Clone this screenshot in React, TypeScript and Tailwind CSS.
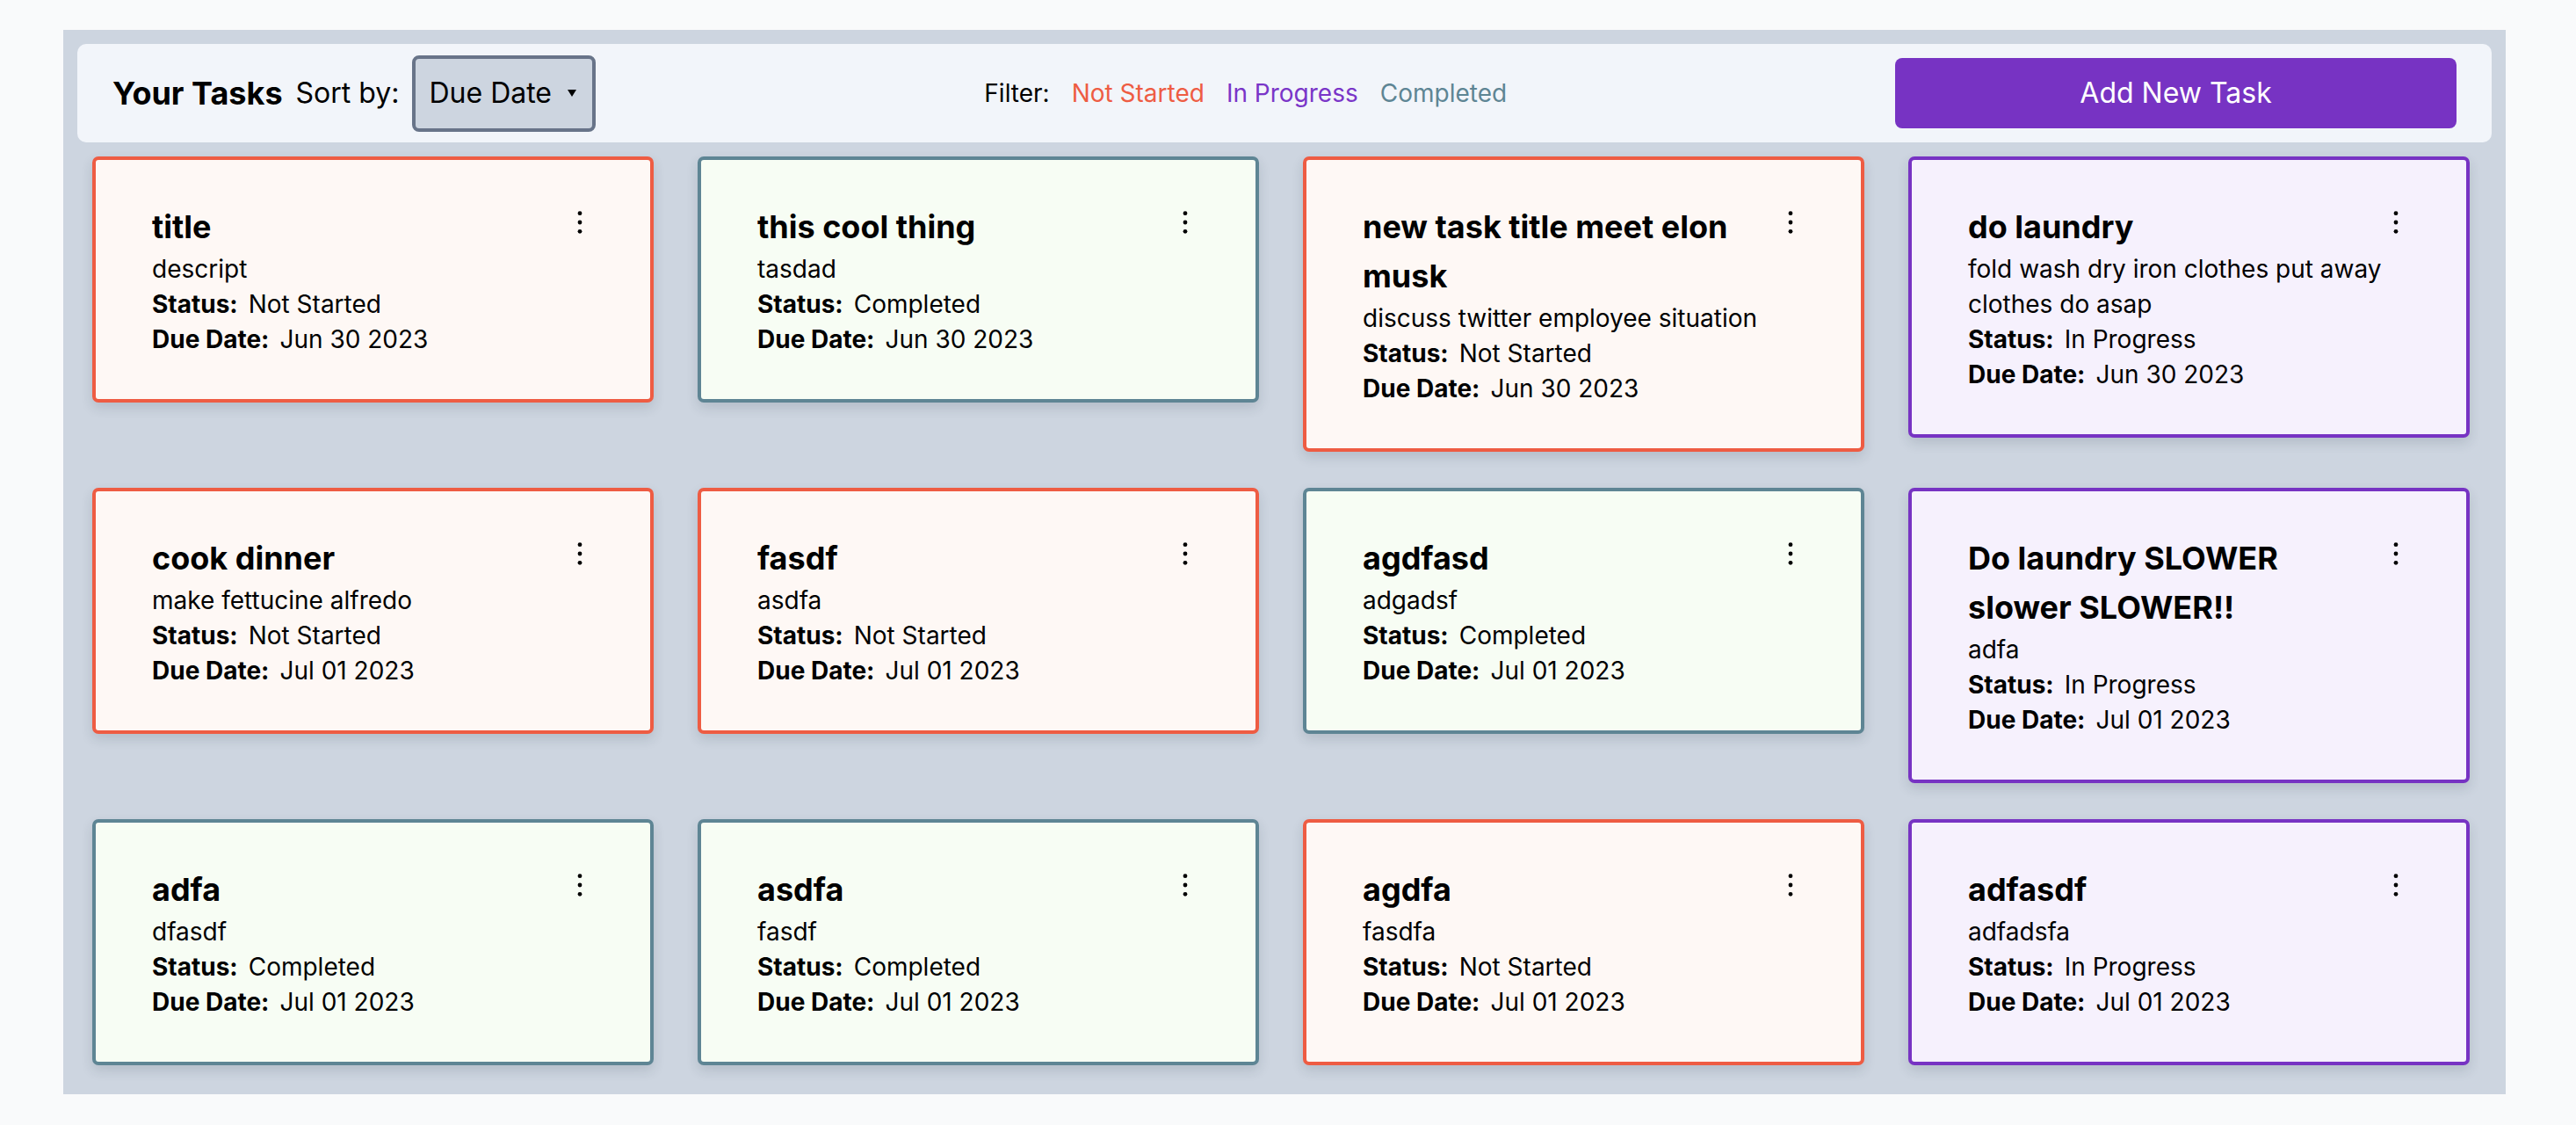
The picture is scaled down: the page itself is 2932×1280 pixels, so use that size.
import React from "react";

type Status = "Not Started" | "In Progress" | "Completed";

interface Task {
  title: string;
  desc: string;
  status: Status;
  due: string;
}

const tasks: Task[] = [
  { title: "title", desc: "descript", status: "Not Started", due: "Jun 30 2023" },
  { title: "this cool thing", desc: "tasdad", status: "Completed", due: "Jun 30 2023" },
  { title: "new task title meet elon musk", desc: "discuss twitter employee situation", status: "Not Started", due: "Jun 30 2023" },
  { title: "do laundry", desc: "fold wash dry iron clothes put away clothes do asap", status: "In Progress", due: "Jun 30 2023" },
  { title: "cook dinner", desc: "make fettucine alfredo", status: "Not Started", due: "Jul 01 2023" },
  { title: "fasdf", desc: "asdfa", status: "Not Started", due: "Jul 01 2023" },
  { title: "agdfasd", desc: "adgadsf", status: "Completed", due: "Jul 01 2023" },
  { title: "Do laundry SLOWER slower SLOWER!!", desc: "adfa", status: "In Progress", due: "Jul 01 2023" },
  { title: "adfa", desc: "dfasdf", status: "Completed", due: "Jul 01 2023" },
  { title: "asdfa", desc: "fasdf", status: "Completed", due: "Jul 01 2023" },
  { title: "agdfa", desc: "fasdfa", status: "Not Started", due: "Jul 01 2023" },
  { title: "adfasdf", desc: "adfadsfa", status: "In Progress", due: "Jul 01 2023" },
];

const cardStyle: Record<Status, string> = {
  "Not Started": "border-[#ee5c43] bg-[#fef8f5]",
  Completed: "border-[#5e8594] bg-[#f7fdf4]",
  "In Progress": "border-[#7733c3] bg-[#f6f1fd]",
};

function Kebab() {
  return (
    <svg width="32" height="32" viewBox="0 0 32 32" className="mt-[7px] shrink-0">
      <circle cx="16" cy="5.7" r="2.4" fill="#000" />
      <circle cx="16" cy="16" r="2.4" fill="#000" />
      <circle cx="16" cy="26.3" r="2.4" fill="#000" />
    </svg>
  );
}

function Card({ t }: { t: Task }) {
  return (
    <div
      className={`w-[639px] rounded-[7px] border-[4px] px-[64px] py-[48px] shadow-[0_6px_14px_rgba(30,41,59,0.14)] ${cardStyle[t.status]}`}
    >
      <div className="flex items-start justify-between gap-[16px]">
        <div className="text-[36px] leading-[56px] font-bold text-black">{t.title}</div>
        <Kebab />
      </div>
      <div className="text-[28px] leading-[40px] text-black">{t.desc}</div>
      <div className="text-[28px] leading-[40px] text-black">
        <span className="font-bold">Status:</span>
        <span className="ml-[12px]">{t.status}</span>
      </div>
      <div className="text-[28px] leading-[40px] text-black">
        <span className="font-bold">Due Date:</span>
        <span className="ml-[12px]">{t.due}</span>
      </div>
    </div>
  );
}

export default function App() {
  return (
    <div className="min-h-[1280px] w-full bg-[#f9fafb] pt-[34px] pl-[72px] font-['Inter',sans-serif] text-black">
      <div className="w-[2780px] bg-[#cdd5e0] p-[16px]">
        <div className="flex h-[112px] items-center justify-between rounded-[10px] bg-[#f2f5fa] px-[40px]">
          <div className="flex items-center gap-[15px]">
            <span className="text-[36px] font-bold leading-[56px]">Your Tasks</span>
            <span className="text-[32px] leading-[48px]">Sort by:</span>
            <button className="flex h-[87px] w-[209px] shrink-0 items-center justify-between rounded-[8px] border-[4px] border-[#687489] bg-[#cdd5e0] pl-[15px] pr-[18px] text-[32px] leading-[48px] text-black">
              <span>Due Date</span>
              <svg width="10" height="8" viewBox="0 0 10 8">
                <polygon points="0,0 10,0 5,8" fill="#000" />
              </svg>
            </button>
          </div>
          <div className="flex items-center gap-[25px] text-[28px] leading-[40px]">
            <span className="text-black">Filter:</span>
            <span className="text-[#ee5c43]">Not Started</span>
            <span className="text-[#7a35c8]">In Progress</span>
            <span className="text-[#5e8594]">Completed</span>
          </div>
          <button className="flex h-[80px] w-[639px] items-center justify-center rounded-[8px] bg-[#7733c3] text-[32px] leading-[48px] text-white">
            Add New Task
          </button>
        </div>
        <div className="mt-[16px] grid grid-cols-[repeat(4,639px)] items-start gap-x-[50px] gap-y-[41px] px-[17px] pb-[17px]">
          {tasks.map((t, i) => (
            <Card key={i} t={t} />
          ))}
        </div>
      </div>
    </div>
  );
}
